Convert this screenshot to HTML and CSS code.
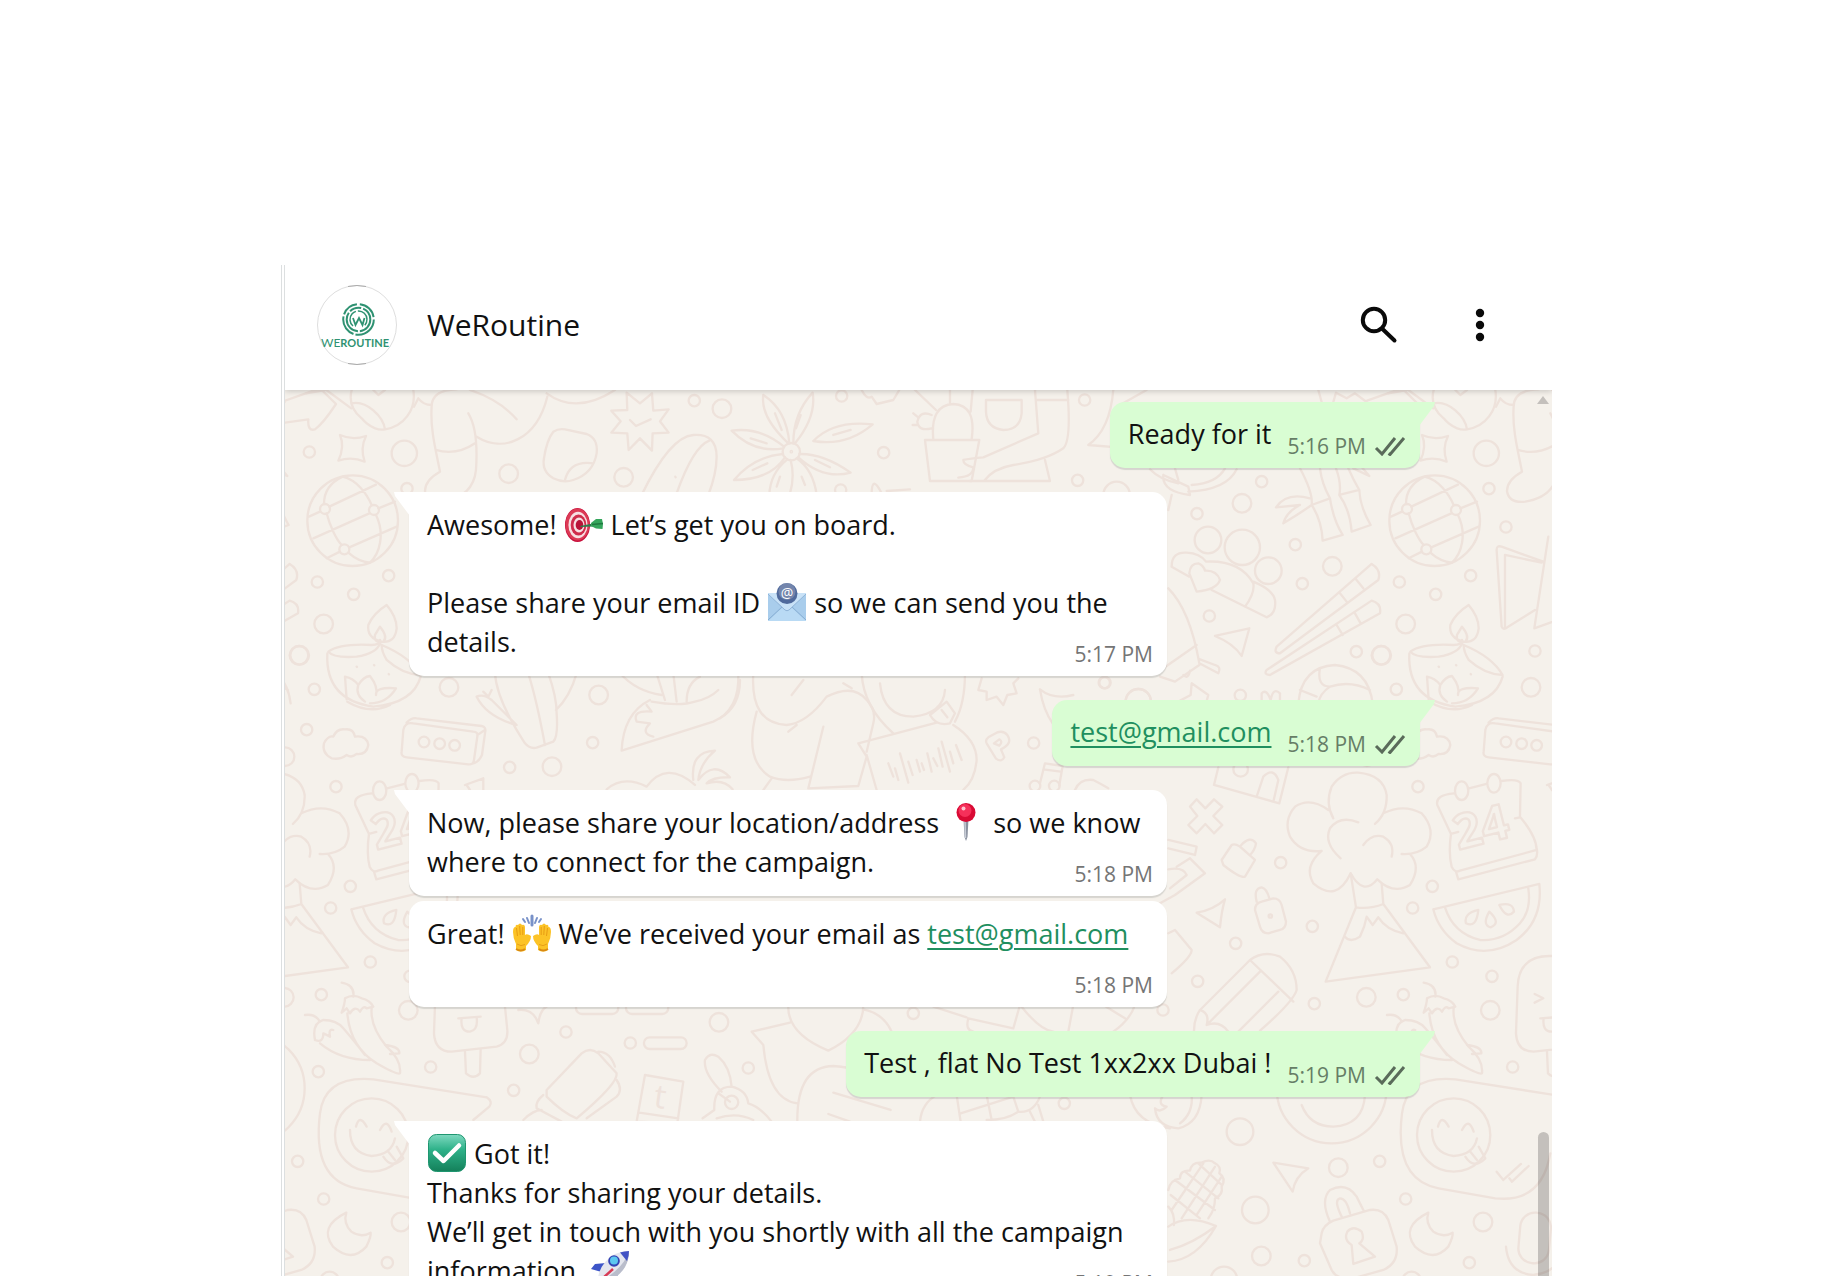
FILE: index.html
```html
<!DOCTYPE html>
<html lang="en">
<head>
    <meta charset="UTF-8">
    <meta name="viewport" content="width=device-width, initial-scale=1.0">
    <title>WeRoutine</title>
    <link rel="stylesheet" href="styles.css">
</head>
<body>
    <main class="chat">
        <header class="chat-header">
            <svg class="avatar" viewBox="0 0 80 80" role="img" aria-label="WeRoutine logo">
                <circle cx="40" cy="40" r="39.5" fill="#fff" stroke="#dedede"/>
                <path d="M31 1.500Q40 -.5 49 1.500M31 78.500Q40 80.500 49 78.500" fill="none" stroke="#aaa"/>
                <g fill="none" stroke="#2f9272" stroke-width="2">
                    <circle cx="41.500" cy="34.500" r="15.300" stroke-dasharray="27 2 22 2 17 3 20 3"/>
                    <circle cx="41.500" cy="34.500" r="11.800" stroke-dasharray="17 2 25 2 12 2"/>
                    <path d="M36 41A8.500 8.500 0 1 1 47.500 40.500" stroke-dasharray="18 2 20" stroke-width="1.500"/>
                    <path d="M36 33L38.500 40L42 33L45.500 40L47.500 33" stroke-width="1.800"/>
                </g>
                <text x="4" y="62" class="logo-text">WE<tspan class="logo-bold">ROUTINE</tspan></text>
            </svg>
            <h1>WeRoutine</h1>
            <button type="button" class="icon-button" aria-label="Search">
                <svg width="40" height="40" viewBox="0 0 40 40" fill="none" stroke="#0a0a0a" stroke-width="4" stroke-linecap="round">
                    <circle cx="15" cy="15" r="11.200"/>
                    <path d="M23.500 24L35.500 35.500"/>
                </svg>
            </button>
            <button type="button" class="icon-button" aria-label="Menu">
                <svg width="40" height="40" viewBox="0 0 40 40" fill="#0a0a0a">
                    <circle cx="20" cy="8" r="4.200"/>
                    <circle cx="20" cy="20" r="4.200"/>
                    <circle cx="20" cy="32" r="4.200"/>
                </svg>
            </button>
        </header>

        <section class="messages">
            <svg class="wallpaper" width="100%" height="100%" aria-hidden="true">
                <defs>
                    <g id="doodles">
                        <!-- globe, star, diya -->
                        <g transform="translate(-15 -10) scale(.3333)">
                            <path d="M45 62L150 25L198 72Q160 130 135 148Q112 155 115 118L45 128"/>
                            <path d="M245 30C235 70 250 95 275 115C300 145 330 152 345 148C340 110 290 60 245 70M430 30C440 90 400 140 345 148M310 30L325 45L345 30"/>
                            <path d="M210 165Q248 182 288 168Q270 205 284 245Q245 228 205 242Q225 200 210 165Z"/>
                            <circle cx="118" cy="216" r="17"/><circle cx="403" cy="220" r="38"/><circle cx="716" cy="281" r="28"/>
                            <circle cx="1061" cy="292" r="28"/><circle cx="1273" cy="62" r="17"/><circle cx="1356" cy="86" r="28"/>
                            <circle cx="411" cy="326" r="17"/><circle cx="142" cy="606" r="17"/><circle cx="356" cy="587" r="17"/>
                            <circle cx="251" cy="643" r="17"/><circle cx="161" cy="732" r="28"/><circle cx="89" cy="826" r="28"/>
                            <circle cx="133" cy="928" r="17"/><circle cx="537" cy="922" r="28"/><circle cx="986" cy="945" r="28"/>
                            <circle cx="248" cy="422" r="136"/>
                            <circle cx="165" cy="387" r="15"/><circle cx="312" cy="390" r="15"/><circle cx="223" cy="508" r="15"/>
                            <path d="M178 380L318 314M117 410L150 395M130 475L298 400M325 385L375 365M170 535L210 515M238 502L380 440M218 290C175 310 162 340 162 372M170 400C180 440 200 480 215 495M218 290C260 300 290 340 305 375M318 405C345 460 330 520 300 548M235 518Q265 545 300 548"/>
                            <path d="M560 28Q485 30 485 80C480 150 500 220 510 275Q465 300 465 333Q470 370 520 365Q610 350 618 270C622 210 620 140 595 100M432 80L445 55Q460 75 485 75M497 210Q560 228 615 190M620 170C700 220 800 180 832 50M600 30Q690 60 740 118M830 40Q920 105 1035 30"/>
                            <path d="M850 155Q865 145 885 148L950 162Q985 175 980 220Q970 280 910 300Q880 310 850 295Q815 275 822 235Q830 180 850 155ZM885 300Q900 240 970 250"/>
                            <path d="M1070 38L1110 70L1146 40L1150 92L1196 88L1170 124L1196 158L1148 160L1146 212L1110 175L1076 210L1072 160L1024 158L1052 124L1024 92L1072 90ZM1080 120L1098 138L1142 118"/>
                            <path d="M1115 345Q1200 170 1270 165Q1340 160 1340 230Q1340 280 1315 345M1220 340Q1270 200 1318 182M1216 290L1217 292"/>
                            <path d="M350 675Q380 710 380 745Q375 790 335 785Q290 775 295 735Q310 700 350 675ZM330 740Q355 770 340 785Q310 790 315 765Z"/>
                            <path d="M175 815Q210 790 305 795Q330 795 330 780M175 815Q190 835 260 830Q320 820 330 790M335 795Q420 830 452 885Q400 885 350 840Q335 815 335 795M172 820Q165 960 310 980Q430 970 452 890M232 965Q300 1005 360 975"/>
                            <path d="M230 958L225 890Q250 895 265 915Q280 890 300 888Q325 920 318 945M265 915Q255 945 285 965M318 945Q315 920 378 925Q350 970 300 970M260 860L261 861M312 855L313 856M356 882L357 883"/>
                        </g>
                        <!-- flower, cactus, bell -->
                        <g transform="translate(395 -10) scale(.3333)">
                            <circle cx="334" cy="215" r="26"/><circle cx="334" cy="215" r="2"/>
                            <circle cx="485" cy="48" r="17"/><circle cx="611" cy="218" r="17"/><circle cx="1214" cy="60" r="17"/>
                            <circle cx="1193" cy="301" r="17"/><circle cx="1310" cy="345" r="40"/><circle cx="482" cy="330" r="17"/>
                            <path d="M325 190Q240 110 250 45Q320 90 328 190M340 190Q340 100 398 38Q410 110 345 190M310 205Q220 220 155 152Q240 140 312 200M308 222Q220 230 162 300Q270 300 315 232M322 238Q270 280 268 345M330 340Q345 290 332 240M350 235Q400 270 410 345M358 222Q430 220 512 278Q430 300 355 232M400 183Q460 120 578 133Q500 200 400 183"/>
                            <path d="M285 100L305 150M362 105L348 145M212 175L260 190M218 270L262 250M405 240L450 262M460 165L512 150M300 290L290 320M365 290L375 315"/>
                            <path d="M735 180H898L875 303H750ZM760 178Q750 75 820 72Q890 75 875 178M705 30L768 90M810 30V70M878 30L872 95M755 105Q720 90 712 125Q715 155 755 145M700 100L712 110M698 135L712 135"/>
                            <path d="M918 60H1025V100Q1020 150 970 150Q920 145 918 95Z"/>
                            <path d="M1065 30L1075 160L910 232Q870 235 850 240Q850 255 880 262Q880 290 835 293M1162 30Q1175 180 1150 205Q1100 240 1000 255Q940 265 912 303H1110L1095 240M870 303H912M1070 60H1165"/>
                            <path d="M1300 30Q1290 150 1225 195L1350 205M1320 75L1400 30M545 30Q560 60 575 50L590 72L640 60L658 30M575 345Q575 280 605 340M620 333L690 328"/>
                        </g>
                        <!-- bamboo, hand, chopsticks -->
                        <g transform="translate(815 -10) scale(.3333)">
                            <circle cx="485" cy="305" r="17"/><circle cx="426" cy="370" r="28"/><circle cx="291" cy="401" r="17"/>
                            <circle cx="586" cy="494" r="17"/><circle cx="697" cy="559" r="28"/><circle cx="607" cy="611" r="17"/>
                            <circle cx="324" cy="480" r="40"/><circle cx="427" cy="502" r="53"/><circle cx="505" cy="572" r="40"/>
                            <circle cx="328" cy="708" r="17"/><circle cx="769" cy="815" r="17"/><circle cx="843" cy="826" r="28"/>
                            <circle cx="421" cy="946" r="17"/><circle cx="115" cy="965" r="38"/>
                            <circle cx="15" cy="908" r="17"/><circle cx="1218" cy="441" r="17"/><circle cx="1305" cy="813" r="17"/>
                            <path d="M150 268Q180 300 235 310M225 265L235 300M190 285Q185 335 270 345L265 320L190 285M265 335Q380 330 410 268M275 315Q350 310 375 265M215 345L205 390"/>
                            <path d="M215 560Q215 515 260 518Q300 520 318 545Q420 540 460 610Q465 640 435 680M215 560L268 590M335 630L500 712Q530 700 525 660Q520 630 460 605M290 635L268 580Q270 550 295 550Q310 555 315 572Q350 570 360 600Q350 630 290 635Z"/>
                            <path d="M600 265Q640 340 635 375L690 355Q700 420 728 465L668 482Q665 420 635 375M660 265Q665 310 690 355M708 265Q725 310 718 345L778 330Q780 380 812 435L755 455Q750 390 718 345M745 265Q760 300 778 330M630 355Q560 335 528 382L600 375Q560 395 550 430Q600 400 635 375M760 265L808 288L780 255"/>
                            <path d="M530 800Q520 820 540 820L835 600Q845 570 815 552L530 800M720 640L740 665M768 598L790 625M500 870Q490 885 510 885L840 700Q845 670 815 662L500 870M710 735L728 765M765 700L782 730"/>
                            <path d="M205 625Q270 690 298 850L355 880Q365 860 345 855L300 838M290 795L190 865M298 855L225 905L180 890M250 885Q265 900 270 872M345 768L448 745L425 828Q400 790 345 768Z"/>
                            <path d="M595 970Q605 860 705 855Q805 865 818 970M660 865Q650 920 690 920Q750 900 810 930M690 920Q660 940 655 970M600 930L650 950M485 970V940Q500 925 512 960Q520 920 540 940V965M275 910L325 945L318 970M275 910L272 945L235 965"/>
                            <path d="M1330 545L1205 500Q1190 495 1190 510L1205 740Q1210 752 1222 742L1305 690M1215 525V745M1215 525L1325 548M1345 470L1303 745L1400 710"/>
                            <path d="M655 30L665 66M700 66L708 38L740 55L765 40L800 66M865 40L920 30M925 30L1000 85"/>
                        </g>
                        <!-- cloud, cassette, bird -->
                        <g transform="translate(-15 290) scale(.3333)">
                            <circle cx="110" cy="149" r="17"/><circle cx="968" cy="188" r="17"/><circle cx="719" cy="262" r="17"/>
                            <circle cx="846" cy="260" r="28"/><circle cx="45" cy="230" r="28"/>
                            <path d="M185 235Q155 220 162 190Q175 165 190 170Q200 145 225 148Q250 145 255 170Q290 165 295 195Q290 225 260 222Q245 235 230 225Q210 240 185 235Z"/>
                            <path d="M400 150Q405 125 430 130L610 155Q625 155 622 170L612 240Q610 255 595 253L410 232Q392 230 395 215ZM410 128Q425 112 440 115L635 138Q650 140 645 160L636 225Q625 250 600 253M622 165L645 150"/>
                            <circle cx="462" cy="186" r="16"/><circle cx="509" cy="191" r="16"/><circle cx="554" cy="196" r="16"/>
                            <path d="M640 35L655 50L665 30M620 50Q640 40 665 60L740 135Q650 110 620 50M675 -20Q680 60 765 190Q780 208 800 203L850 185Q865 170 860 100Q860 50 835 -20M775 -20Q800 60 825 195M920 -20Q900 50 858 90"/>
                            <path d="M1050 -20Q1100 35 1175 45M1140 60Q1060 100 1055 212L1330 125Q1410 90 1405 -20M1145 65Q1230 80 1275 65Q1320 55 1345 30M1130 75L1145 95Q1085 90 1100 125L1140 130Q1110 160 1150 170M1160 -20L1185 60M1210 -20L1220 65M1250 65Q1250 10 1290 -10"/>
                            <path d="M1010 328Q1060 285 1130 320Q1190 240 1275 315M1270 300Q1260 215 1335 212Q1290 250 1285 300Q1330 240 1380 292Q1330 290 1310 310Q1360 295 1388 328M585 315L640 295L640 330M590 315L600 330"/>
                        </g>
                        <!-- mascots, voice note, music -->
                        <g transform="translate(435 290) scale(.3333)">
                            <path d="M0 115Q60 80 60 0M250 0L215 45M100 -20Q90 130 200 135Q260 130 320 50Q400 10 440 60Q470 90 460 130L440 215M110 95Q70 240 150 290Q200 310 270 290M310 140L265 325L415 318L440 230L415 190L650 128M205 155L230 135M155 295L130 330M440 225L470 330"/>
                            <path d="M425 -20Q430 80 520 160M370 10L395 25M480 10Q490 110 580 110Q670 100 675 30M735 -20Q735 70 705 125M630 105Q650 140 690 130L705 100L680 65ZM665 90L682 112M700 135Q770 180 770 240Q765 300 730 330"/>
                            <path d="M505 250L520 290M525 265L535 300M540 220L565 308M565 245L578 285M590 240L600 275M605 250L612 270M622 220L635 275M640 235L652 258M655 205L668 260M665 185L690 275M690 215L700 250M708 195L725 240"/>
                            <path d="M785 -5L775 30L800 35L800 60L830 50L850 75L862 45L890 40L880 10L895 -5M800 190L828 236Q845 248 853 232L843 208Q880 190 862 165Q850 150 830 158L805 172Q795 180 800 190ZM822 190L838 178Q850 185 838 197Z"/>
                            <circle cx="941" cy="189" r="17"/><circle cx="1153" cy="8" r="17"/><circle cx="1255" cy="65" r="38"/>
                            <circle cx="945" cy="318" r="16"/><circle cx="1003" cy="318" r="16"/>
                            <path d="M960 28Q970 90 998 130M960 28Q1000 60 1060 45M960 310L975 250L1028 258L1018 316M970 268L1022 275M1065 330Q1080 295 1120 300Q1140 310 1165 325"/>
                        </g>
                        <!-- volcano, calendar, watermelon, pencil -->
                        <g transform="translate(865 290) scale(.3333)">
                            <path d="M550 415Q525 370 545 320Q575 275 625 278Q700 285 710 345Q712 400 675 432M535 390Q480 350 435 380Q400 420 420 470Q450 520 515 513M572 535Q520 490 540 445Q570 405 625 427M640 495Q665 460 700 470Q735 490 725 530M700 400Q760 370 815 400Q860 450 830 500Q800 525 755 522M515 513Q460 560 490 610Q560 670 602 580Q640 650 682 598Q730 645 780 615Q815 560 780 522"/>
                            <path d="M602 580L618 682Q660 688 700 672L695 610M618 682L527 905L840 862L700 672M585 770Q600 790 630 770Q645 740 650 710L668 735L685 712Q710 750 760 760"/>
                            <path d="M120 380L140 358L166 385L192 358L217 380L190 408L217 435L192 460L166 432L140 460L115 435L142 408ZM215 540L245 495Q255 490 270 500L315 540L285 590Q270 595 220 555ZM272 497Q300 465 318 490Q315 510 300 525"/>
                            <circle cx="392" cy="548" r="17"/><circle cx="804" cy="320" r="17"/><circle cx="847" cy="619" r="17"/>
                            <circle cx="788" cy="684" r="17"/><circle cx="487" cy="739" r="17"/><circle cx="257" cy="790" r="17"/>
                            <circle cx="907" cy="846" r="17"/><circle cx="1026" cy="889" r="17"/><circle cx="143" cy="904" r="17"/>
                            <circle cx="493" cy="971" r="17"/><circle cx="760" cy="944" r="17"/><circle cx="649" cy="952" r="28"/>
                            <circle cx="1021" cy="991" r="28"/><circle cx="39" cy="990" r="17"/><circle cx="361" cy="708" r="5"/>
                            <path d="M55 480L140 500L135 525L55 505M55 568Q100 560 110 585L60 625M80 560L120 535L165 580L75 645L30 670M140 698Q190 690 225 658Q215 690 210 742ZM55 760L75 750L125 810Q125 830 65 880"/>
                            <path d="M315 690Q315 670 335 665L370 655Q390 655 395 675L408 725Q408 745 390 750L355 760Q335 760 330 740ZM320 665Q310 625 335 622Q350 625 358 655"/>
                            <ellipse cx="935" cy="332" rx="20" ry="28"/><ellipse cx="1032" cy="310" rx="20" ry="28"/>
                            <path d="M912 340Q855 345 862 375L903 462Q895 520 905 560Q915 580 930 572L1160 510Q1160 470 1110 410L1112 310Q1105 295 1055 303M957 325L1010 312M903 462L925 456M1095 415L1110 412M918 575L925 598L1155 538Q1165 525 1160 505"/>
                            <text x="925" y="510" class="doodle-number" transform="rotate(-14 925 510)">24</text>
                            <path d="M850 688L1168 612Q1180 720 1100 780Q1010 840 920 790Q865 750 850 688M885 682Q910 760 990 780Q1060 785 1110 730Q1145 690 1135 625M985 690Q940 700 948 730Q980 745 985 690ZM1018 695Q995 735 1022 742Q1055 730 1018 695ZM1048 675Q1090 665 1092 695Q1070 720 1048 675Z"/>
                            <path d="M205 262L192 315L388 370L415 262M320 350L340 290Q370 260 385 300L370 365"/><circle cx="272" cy="268" r="22"/>
                            <path d="M150 990L300 840Q340 810 390 830Q440 870 440 930Q430 965 330 1052M300 840L430 965M330 875L170 1035M385 935L265 1055M150 990Q130 1020 132 1060M150 990Q180 1000 170 1035Q210 1020 235 1055"/>
                        </g>
                        <!-- chilis, ice pop, smiley card -->
                        <g transform="translate(-15 590) scale(.3333)">
                            <circle cx="145" cy="275" r="17"/><circle cx="482" cy="261" r="17"/><circle cx="731" cy="331" r="17"/>
                            <circle cx="778" cy="222" r="28"/><circle cx="888" cy="156" r="17"/><circle cx="1081" cy="189" r="17"/>
                            <circle cx="1347" cy="127" r="28"/><circle cx="1435" cy="264" r="17"/><circle cx="83" cy="544" r="17"/>
                            <circle cx="161" cy="657" r="17"/><circle cx="393" cy="726" r="28"/><circle cx="352" cy="848" r="17"/>
                            <path d="M492 160Q495 215 545 215L680 200Q715 190 712 150L695 -20Q690 -70 600 -72Q500 -75 497 20ZM548 42L574 55L548 68M565 115L632 110M575 115Q570 155 600 155Q625 150 620 112M585 215L588 280Q610 300 630 280L632 208"/>
                            <path d="M250 50Q255 15 215 8M215 98Q225 70 225 55Q250 40 275 55Q300 60 310 80L290 85Q280 75 270 95Q255 75 240 100L230 85ZM232 100Q240 200 320 250Q380 285 390 280Q395 240 350 200Q300 140 305 85M150 125Q135 100 105 105M135 180Q125 130 160 120Q200 120 220 145M135 180Q160 190 160 160L180 170Q175 145 190 150M150 190Q210 240 300 240M220 145Q250 180 285 225M345 195Q390 200 388 220L360 222"/>
                            <path d="M745 90Q790 85 805 130Q810 90 830 80"/>
                            <rect x="918" y="60" width="127" height="42" rx="18"/><rect x="1068" y="60" width="127" height="42" rx="18"/><rect x="1122" y="172" width="128" height="35" rx="17"/>
                            <path d="M830 330L935 220Q960 200 985 220L1040 280Q1045 310 920 415Q880 400 830 350ZM985 215Q1020 215 1035 260M1040 300Q1060 330 1040 350L950 415M820 345Q795 365 800 385L875 425M760 420Q790 390 815 390"/>
                            <path d="M1125 285L1240 305L1222 430L1100 425ZM1108 398L1225 415"/>
                            <text x="1148" y="382" class="doodle-letter" transform="rotate(8 1148 382)">t</text>
                            <path d="M1355 335Q1300 280 1305 240Q1320 215 1345 230Q1380 260 1385 320M1298 415L1333 390Q1330 320 1385 320Q1430 330 1435 370Q1470 380 1505 425M1345 340L1380 365M1340 415Q1400 395 1450 420"/><circle cx="1385" cy="367" r="20"/>
                            <path d="M650 352L310 298Q165 285 150 400Q125 600 260 625L430 655Q570 670 595 520M650 352Q670 365 658 380L610 420M434 575L454 600L507 552M472 595L480 605L530 558"/>
                            <circle cx="305" cy="465" r="110"/>
                            <path d="M258 440Q268 400 290 440M330 450Q350 410 365 455M240 450Q240 520 305 528Q365 525 375 475M340 530Q365 570 400 535L380 500M355 515L375 540"/>
                        </g>
                        <!-- heart, hands -->
                        <g transform="translate(435 590) scale(.3333)">
                            <path d="M205 75Q200 160 325 212Q430 160 430 75M210 128L95 155L130 195Q145 360 232 370M430 88Q490 100 515 155M232 425Q230 260 340 258Q390 262 410 270M340 338L512 390M325 402L390 425"/>
                            <circle cx="580" cy="100" r="17"/><circle cx="1033" cy="370" r="17"/>
                            <path d="M640 80L740 112M900 75L880 145L745 115Q735 150 760 155M905 80Q960 150 1000 155M1060 75L1045 155M1150 75L1215 115M1245 75Q1230 120 1180 155M600 425Q605 370 650 345M710 345L722 425M722 400L880 350M800 345L815 420M880 350L895 395Q940 400 960 350M800 420Q860 420 895 395M930 395L945 425M955 375L970 425"/>
                        </g>
                        <!-- corn, padlock, moon, mic -->
                        <g transform="translate(865 590) scale(.3333)">
                            <circle cx="545" cy="325" r="165"/><circle cx="270" cy="455" r="40"/><circle cx="565" cy="563" r="28"/>
                            <circle cx="316" cy="690" r="40"/><circle cx="334" cy="828" r="28"/><circle cx="463" cy="842" r="17"/>
                            <circle cx="222" cy="900" r="40"/><circle cx="785" cy="903" r="28"/>
                            <path d="M455 375Q480 440 550 440Q640 435 645 345M370 548L475 565Q435 590 428 635Z"/>
                            <path d="M835 698Q750 740 795 800Q850 850 895 800Q910 770 908 758Q880 775 850 755Q825 730 835 698Z"/>
                            <rect x="1108" y="698" width="92" height="152" rx="44" transform="rotate(5 1154 774)"/><path d="M1068 800Q1075 880 1150 885Q1200 880 1220 850"/>
                            <path d="M540 725Q510 660 540 630Q590 605 620 650L640 690M575 710Q550 660 570 655Q590 655 600 700M515 760Q520 735 550 722L660 690Q700 685 715 720L740 800Q745 850 700 870L610 895Q560 900 545 870L510 790ZM605 795Q580 780 592 755Q610 735 635 755Q645 780 628 790L675 830L610 852Z"/>
                            <path d="M55 630Q60 600 90 595Q90 570 120 572Q125 545 155 548Q180 535 195 550Q215 560 208 580Q230 595 215 620Q220 645 195 655Q195 690 175 715M55 680Q75 700 72 735M75 600L195 690M62 645L150 715M105 575L205 655M145 550L215 615M160 550L65 690M195 560L95 715M215 590L140 705"/>
                            <path d="M55 740Q110 700 198 738Q140 840 55 845M60 810Q130 790 198 738M15 385Q20 440 85 445Q150 430 155 345M15 385Q30 400 50 380Q20 375 40 345M-60 345Q-45 430 60 445M125 345Q130 400 90 430"/>
                        </g>
                    </g>
                </defs>
                <use href="#doodles" x="-1082"/>
                <use href="#doodles"/>
                <use href="#doodles" x="1082"/>
            </svg>

            <ol class="message-list">
                <li class="message out tail">
                    <p>Ready for it</p>
                    <span class="time">5:16 PM
                        <svg class="ticks" viewBox="0 0 32 20" role="img" aria-label="Delivered"><path d="M2 12L8 18L21 2M14.500 17.500L16 18.500L30 2"/></svg>
                    </span>
                </li>
                <li class="message in tail">
                    <p>Awesome! <svg class="emoji" viewBox="0 0 38 38" role="img" aria-label="Target">
                            <ellipse cx="12.500" cy="20" rx="12.500" ry="17" fill="#c8103c"/>
                            <ellipse cx="12.500" cy="19.500" rx="12" ry="16" fill="#dc3a55"/>
                            <ellipse cx="13" cy="20" rx="9.600" ry="13.200" fill="#f7dfe2"/>
                            <ellipse cx="13.500" cy="20" rx="7.800" ry="10.600" fill="#cf2c4b"/>
                            <ellipse cx="14" cy="20" rx="5.500" ry="7.500" fill="#f7dfe2"/>
                            <ellipse cx="14.500" cy="20" rx="3.800" ry="5" fill="#b81438"/>
                            <path d="M15 21L28 18.500V21.500L16 22Z" fill="#2d7d4d"/>
                            <path d="M26 18L31 14H37L38 19L37.500 24L31 23.500L26 21Z" fill="#35a65c"/>
                            <path d="M27 19.500L38 18.500" stroke="#1f7a40" stroke-width="1.500"/>
                        </svg> Let’s get you on board.<br><br>Please share your email ID <svg class="emoji" viewBox="0 0 38 38" role="img" aria-label="E-mail">
                            <rect x="0" y="10" width="38" height="28" rx="1" fill="#a9cdec"/>
                            <path d="M0 38L15 24H23L38 38Z" fill="#b9daf4"/>
                            <path d="M0 37L14.500 23.500M38 37L23.500 23.500" stroke="#86add2"/>
                            <path d="M0 10H38V11L21 27Q19 28.500 17 27L0 11Z" fill="#c9e2f7"/>
                            <path d="M0 11L17 27Q19 28.500 21 27L38 11" fill="none" stroke="#8fb4d8"/>
                            <circle cx="19" cy="10.500" r="10.500" fill="#506a9c"/>
                            <circle cx="19" cy="8.500" r="8.500" fill="#8291b4" opacity=".7"/>
                            <text x="19" y="15" class="at-sign">@</text>
                        </svg> so we can send you the details.</p>
                    <span class="time">5:17 PM</span>
                </li>
                <li class="message out tail">
                    <p><a href="mailto:test@gmail.com">test@gmail.com</a></p>
                    <span class="time">5:18 PM
                        <svg class="ticks" viewBox="0 0 32 20" role="img" aria-label="Delivered"><path d="M2 12L8 18L21 2M14.500 17.500L16 18.500L30 2"/></svg>
                    </span>
                </li>
                <li class="message in tail">
                    <p>Now, please share your location/address <svg class="emoji" viewBox="0 0 38 38" role="img" aria-label="Pin">
                            <path d="M16.500 16H21.500L20.500 34L19 38L17.500 34Z" fill="#8a919f"/>
                            <path d="M18 18L18.500 35" stroke="#c7ccd6" stroke-width="1.500"/>
                            <circle cx="19" cy="9.500" r="9.500" fill="#d90a34"/>
                            <circle cx="18" cy="7.500" r="6.500" fill="#f5305a"/>
                            <circle cx="16.500" cy="5.500" r="2" fill="#ffc3cf"/>
                        </svg> so we know where to connect for the campaign.</p>
                    <span class="time">5:18 PM</span>
                </li>
                <li class="message in">
                    <p>Great! <svg class="emoji" viewBox="0 0 38 38" role="img" aria-label="Raised hands">
                            <g stroke="#7891c8" stroke-width="2" stroke-linecap="round"><path d="M19 2V11" stroke-width="3"/><path d="M14 4L16 9M24 4L22 9M10 5L12 8M28 5L26 8"/></g>
                            <g id="hand">
                                <path d="M3 36V30Q0 24 0 18Q0 13 2.500 13Q2.500 10 5 11Q7 8 9 11Q12 10 12 14V21Q14 19 18 22Q18 27 13 32V36Q8 39 3 36Z" fill="#fcc327"/>
                                <path d="M3.500 14L4.500 22M6.700 12L7.200 21M9.800 13V21" stroke="#e89b13" fill="none"/>
                                <path d="M4 30Q8 33 12 30.500" stroke="#e8a018" fill="none"/>
                                <path d="M3 35Q8 38 12 35" stroke="#d98a12" stroke-width="2" fill="none"/>
                            </g>
                            <use href="#hand" transform="translate(38 0) scale(-1 1)"/>
                        </svg> We’ve received your email as <a href="mailto:test@gmail.com">test@gmail.com</a><br><br></p>
                    <span class="time">5:18 PM</span>
                </li>
                <li class="message out tail">
                    <p>Test , flat No Test 1xx2xx Dubai !</p>
                    <span class="time">5:19 PM
                        <svg class="ticks" viewBox="0 0 32 20" role="img" aria-label="Delivered"><path d="M2 12L8 18L21 2M14.500 17.500L16 18.500L30 2"/></svg>
                    </span>
                </li>
                <li class="message in tail">
                    <p><svg class="emoji" viewBox="0 0 38 38" role="img" aria-label="Done">
                            <defs><linearGradient id="green" x2="0" y2="1"><stop offset="0" stop-color="#7fd9c0"/><stop offset=".4" stop-color="#2fb28a"/><stop offset="1" stop-color="#14805a"/></linearGradient></defs>
                            <rect x=".5" y=".5" width="37" height="37" rx="8" fill="url(#green)" stroke="#1f9670"/>
                            <path d="M7 19L15.500 27L31 11.500" fill="none" stroke="#fff" stroke-width="4.500" stroke-linecap="round" stroke-linejoin="round"/>
                        </svg> Got it!<br>Thanks for sharing your details.<br>We’ll get in touch with you shortly with all the campaign information. <svg class="emoji" viewBox="0 0 38 38" role="img" aria-label="Rocket">
                            <path d="M15 12L4 13L0 18L14 22ZM27 24L26 34L20 38L16 28Z" fill="#3d55c8"/>
                            <path d="M7 27Q9 12 24 3Q31 0 38 0Q38 9 34 16Q27 27 13 33Z" fill="#e4e6ee"/>
                            <path d="M13 33Q27 27 34 16Q38 9 38 0Q33 17 10 30Z" fill="#b9bdcb"/>
                            <path d="M29 1.500Q33 0 38 0Q38 5 36 10Z" fill="#4152c4"/>
                            <circle cx="23" cy="10" r="5.800" fill="#3443b4"/>
                            <circle cx="23" cy="9.500" r="4" fill="#5cc7f0"/>
                            <path d="M8 25L14 31L4 36Z" fill="#d83b55"/>
                            <path d="M12 27L22 18" stroke="#d83b55" stroke-width="2.500"/>
                        </svg></p>
                    <span class="time">5:19 PM</span>
                </li>
            </ol>

            <span class="scroll-arrow"></span>
            <span class="scroll-thumb"></span>
        </section>
    </main>
</body>
</html>
```
FILE: styles.css
```css
body {
    margin: 0;
    height: 100vh;
    display: grid;
    grid-template-columns: 281fr 1271fr 280fr;
    background: #fff;
    color: #111;
    font-family: "Segoe UI", "Open Sans", sans-serif;
    overflow: hidden;
}

.chat {
    grid-column: 2;
    display: flex;
    flex-direction: column;
    min-height: 0;
    margin-top: 265px;
    border-left: 4px double #dcdfe0;
}

/* Header */
.chat-header {
    display: flex;
    align-items: center;
    height: 125px;
    flex: none;
    box-sizing: border-box;
    padding: 0 52px 6px 32px;
    background: #fff;
    box-shadow: 0 1px 6px rgba(0, 0, 0, 0.2);
    clip-path: inset(0 0 -10px 0);
    z-index: 1;
}
.avatar {
    width: 80px;
    height: 80px;
    margin-right: 30px;
}
.logo-text {
    font-family: Lato, sans-serif;
    font-size: 12px;
    fill: #2f9272;
}
.logo-bold {
    font-size: 11px;
    font-weight: bold;
}
.chat-header h1 {
    flex: 1;
    margin: 0;
    font-size: 30px;
    font-weight: normal;
}
.icon-button {
    display: flex;
    padding: 0;
    margin-left: 61px;
    border: none;
    background: none;
    cursor: pointer;
}

/* Conversation */
.messages {
    position: relative;
    flex: 1;
    min-height: 0;
    overflow: hidden;
    background: #f5f1eb;
}
.wallpaper {
    position: absolute;
    top: 0;
    left: 0;
    fill: none;
    stroke: #eee2db;
    stroke-width: 7;
    stroke-linecap: round;
    stroke-linejoin: round;
}
.doodle-number {
    font-size: 145px;
    font-weight: bold;
}
.doodle-letter {
    font-size: 100px;
    fill: #eee2db;
    stroke: none;
}
.message-list {
    position: relative;
    display: flex;
    flex-direction: column;
    margin: 0;
    padding: 12px 132px 0 124px;
    list-style: none;
}
.message {
    position: relative;
    box-sizing: border-box;
    border-radius: 15px;
    font-size: 27px;
    line-height: 39px;
    box-shadow: 0 2px 1px rgba(11, 20, 26, 0.13);
}
.message + .message {
    margin-top: 24px;
}
.message.in + .message.in {
    margin-top: 5px;
}
.message p {
    margin: 0;
}
.message a {
    color: #1f8f5f;
    text-decoration-thickness: 2px;
    text-underline-offset: 4px;
}
.in {
    display: grid;
    align-self: flex-start;
    width: 758px;
    max-width: 100%;
    padding: 13px 14px 15px 18px;
    background: #fff;
}
.in p,
.in .time {
    grid-area: 1 / 1;
}
.in .time {
    place-self: end;
}
.out {
    display: flex;
    align-items: flex-end;
    align-self: flex-end;
    gap: 16px;
    padding: 12px 14px 15px 18px;
    background: #d9fdd3;
}
.time {
    display: flex;
    align-items: center;
    gap: 8px;
    margin-bottom: -8px;
    font-size: 21px;
    line-height: 30px;
    color: #757575;
}
.out .time {
    color: #667d66;
}
.ticks {
    width: 32px;
    height: 20px;
    fill: none;
    stroke: #5a6b5a;
    stroke-width: 3;
}
.emoji {
    width: 38px;
    height: 38px;
    margin: 0 1px;
    vertical-align: -8px;
}
.at-sign {
    font-size: 14px;
    text-anchor: middle;
    fill: #fff;
}

/* Bubble corners */
.tail::before {
    content: "";
    position: absolute;
    top: 0;
    width: 16px;
    height: 24px;
    background: inherit;
}
.in.tail {
    border-top-left-radius: 0;
}
.in.tail::before {
    left: -15px;
    clip-path: polygon(0 0, 100% 0, 100% 100%, 1px 4px);
}
.out.tail {
    border-top-right-radius: 0;
}
.out.tail::before {
    right: -15px;
    clip-path: polygon(0 0, 100% 0, 15px 4px, 0 100%);
}

/* Scrollbar */
.scroll-arrow {
    position: absolute;
    top: 6px;
    right: 3px;
    border: 6px solid transparent;
    border-top-width: 0;
    border-bottom: 8px solid #c4c0bc;
}
.scroll-thumb {
    position: absolute;
    top: 742px;
    bottom: 0;
    right: 3px;
    width: 11px;
    border-radius: 6px 6px 0 0;
    background: rgba(0, 0, 0, 0.2);
}
```
